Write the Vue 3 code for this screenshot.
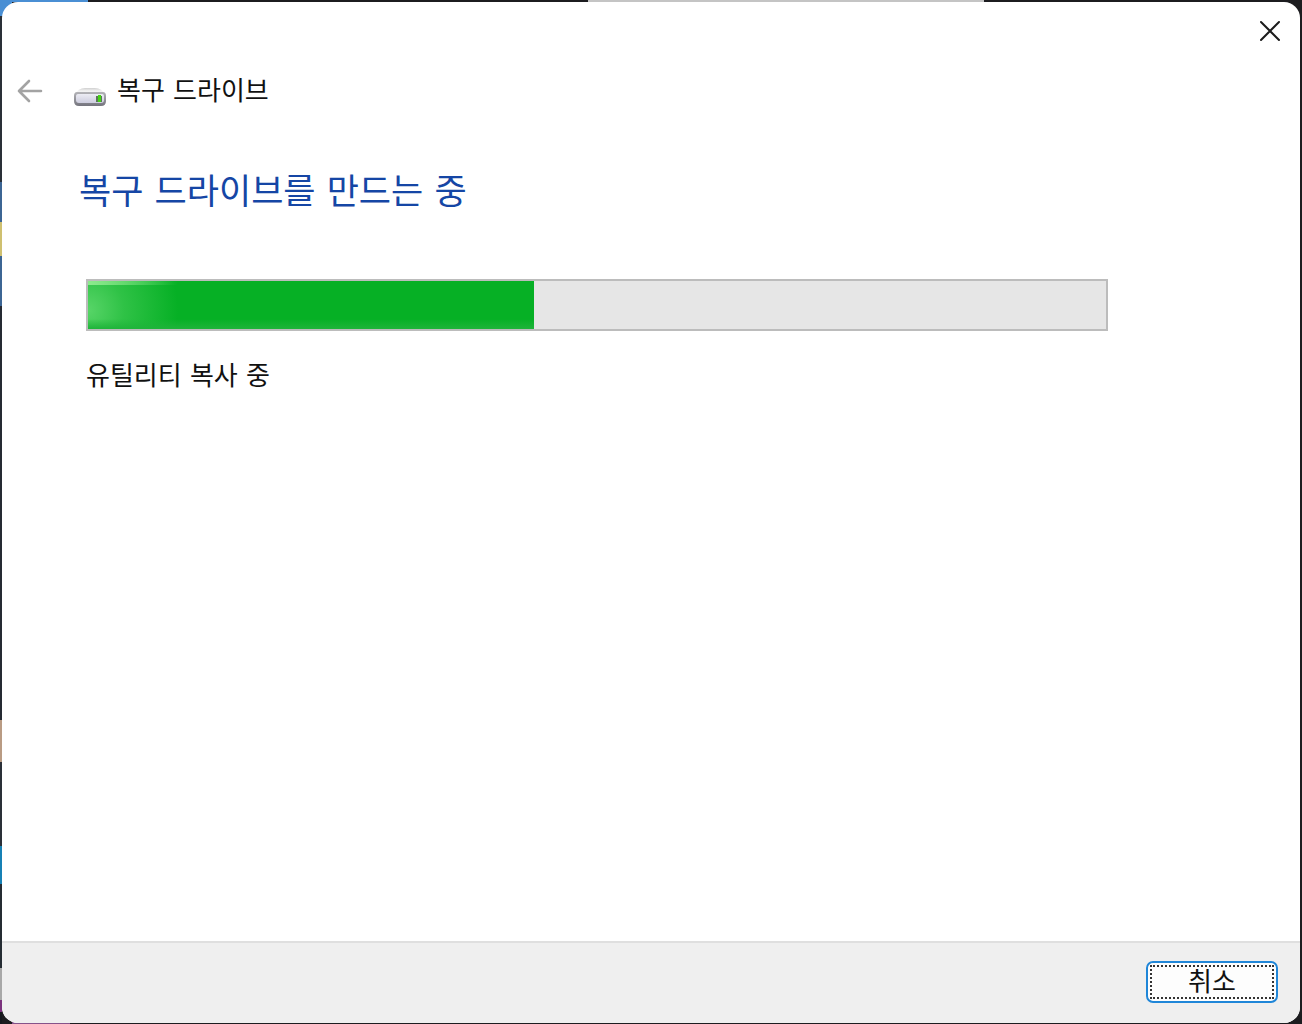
<script setup>
import { ref } from 'vue'

const progress = ref(43.8)
</script>

<template>
  <div class="desktop">
    <main class="window">
      <div class="titlebar">
        <button class="icon-button close" type="button" aria-label="닫기">
          <svg width="22" height="22" viewBox="0 0 22 22" fill="none" stroke="#1c1c1c" stroke-width="2" stroke-linecap="round">
            <path d="M2 2 20 20M20 2 2 20" />
          </svg>
        </button>
      </div>

      <header class="header">
        <button class="icon-button back" type="button" aria-label="뒤로" disabled>
          <svg width="26" height="24" viewBox="0 0 26 24" fill="none" stroke="#a3a3a3" stroke-width="2.6" stroke-linecap="round" stroke-linejoin="round">
            <path d="M24 12H2M12 2 2 12 12 22" />
          </svg>
        </button>
        <svg class="drive" width="34" height="20" viewBox="0 0 34 20" aria-hidden="true">
          <defs>
            <linearGradient id="drive-top" x1="0" y1="0" x2="0" y2="1">
              <stop offset="0" stop-color="#cfcfcf" />
              <stop offset="0.3" stop-color="#f4f4f4" />
              <stop offset="1" stop-color="#d4d4d6" />
            </linearGradient>
            <linearGradient id="drive-edge" x1="0" y1="0" x2="0" y2="1">
              <stop offset="0" stop-color="#b4b4b8" />
              <stop offset="1" stop-color="#74747d" />
            </linearGradient>
            <linearGradient id="drive-face" x1="0" y1="0" x2="0" y2="1">
              <stop offset="0" stop-color="#ececf4" />
              <stop offset="1" stop-color="#cdcdde" />
            </linearGradient>
          </defs>
          <path d="M2 8Q5 1 12 1H22Q29 1 32 8V11H2Z" fill="url(#drive-top)" />
          <path d="M1 9Q1 5 4 5H30Q33 5 33 9V14Q33 19 28 19H6Q1 19 1 14Z" fill="url(#drive-edge)" />
          <path d="M5 7H29Q31 7 31 9V13Q31 16 28 16H6Q3 16 3 13V9Q3 7 5 7Z" fill="url(#drive-face)" />
          <path d="M23 9H29V15H23Z" fill="#5b765b" />
          <path d="M25 8H28V15H25Z" fill="#46d414" />
        </svg>
        <span class="app-name">복구 드라이브</span>
      </header>

      <section class="content">
        <h1>복구 드라이브를 만드는 중</h1>
        <div class="bar">
          <progress aria-labelledby="status" :value="progress" max="100"></progress>
        </div>
        <p id="status">유틸리티 복사 중</p>
      </section>

      <footer class="footer">
        <button class="cancel" type="button"><span>취소</span></button>
      </footer>
    </main>
  </div>
</template>

<style>
body {
  margin: 0;
}
</style>

<style scoped>
.desktop {
  box-sizing: border-box;
  min-height: 100vh;
  padding: 2px 2px 1px;
  display: flex;
  background:
    linear-gradient(#4a8fd4, #4a8fd4) 0 0 / 88px 2px no-repeat,
    linear-gradient(#4a8fd4, #4a8fd4) 0 0 / 12px 16px no-repeat,
    linear-gradient(#c4c4c4, #c4c4c4) 588px 0 / 396px 2px no-repeat,
    linear-gradient(#85538a, #85538a) 12px 100% / 58px 2px no-repeat,
    linear-gradient(
      #2a3038 182px, #3c6594 182px 222px, #cfc070 222px 256px,
      #3c6594 256px 306px, #252a33 306px 720px, #b99b83 720px 762px,
      #2a3038 762px 846px, #1681b5 846px 884px, #252c33 884px 968px,
      #a8a8a8 968px 1000px, #7b327d 1000px 1012px, #15181d 1012px
    ) 0 0 / 2px 100% no-repeat,
    #1c1c1f;
  font-family: "DejaVu Sans", "Noto Sans CJK KR", sans-serif;
  color: #111;
}

.window {
  flex: 1;
  display: flex;
  flex-direction: column;
  overflow: hidden;
  border-radius: 16px;
  background: #fff;
}

.icon-button {
  display: flex;
  padding: 0;
  border: 0;
  background: none;
}

.titlebar {
  display: flex;
  justify-content: flex-end;
  padding: 18px 19px;
}

.header {
  display: flex;
  align-items: center;
  height: 62px;
  padding-left: 15px;
}

.drive {
  margin: 12px 10px 0 30px;
}

.app-name {
  font-size: 26px;
  line-height: 32px;
}

.content {
  flex: 1;
  padding: 44px 192px 40px 84px;
}

h1 {
  margin: 0 0 0 -7px;
  font-size: 35px;
  font-weight: 400;
  line-height: 52px;
  color: #1546a5;
}

.bar {
  margin-top: 61px;
  border: 2px solid #bcbcbc;
  background: #e6e6e6;
}

progress {
  display: block;
  width: 100%;
  height: 48px;
  appearance: none;
  border: 0;
}

progress::-webkit-progress-bar {
  background: #e6e6e6;
}

progress::-webkit-progress-value {
  background:
    linear-gradient(90deg, #8eea8e, #8eea8e00) 0 0 / 90px 4px no-repeat,
    linear-gradient(0deg, #1fb43a, #1fb43a00) 0 100% / 100% 10px no-repeat,
    radial-gradient(ellipse 90px 90px at 0 60%, #58d568, #2fc246 40%, #06b025);
}

p {
  margin: 29px 0 0;
  font-size: 26px;
  line-height: 32px;
}

.footer {
  display: flex;
  justify-content: flex-end;
  padding: 18px 22px 20px;
  border-top: 2px solid #dfdfdf;
  background: #efefef;
}

.cancel {
  box-sizing: border-box;
  width: 132px;
  height: 42px;
  padding: 2px;
  border: 2px solid #1f86d8;
  border-radius: 7px;
  background: #fdfdfd;
  font: inherit;
  font-size: 26px;
  line-height: 30px;
  color: #111;
}

.cancel span {
  display: block;
  border: 2px dotted #333;
}
</style>
